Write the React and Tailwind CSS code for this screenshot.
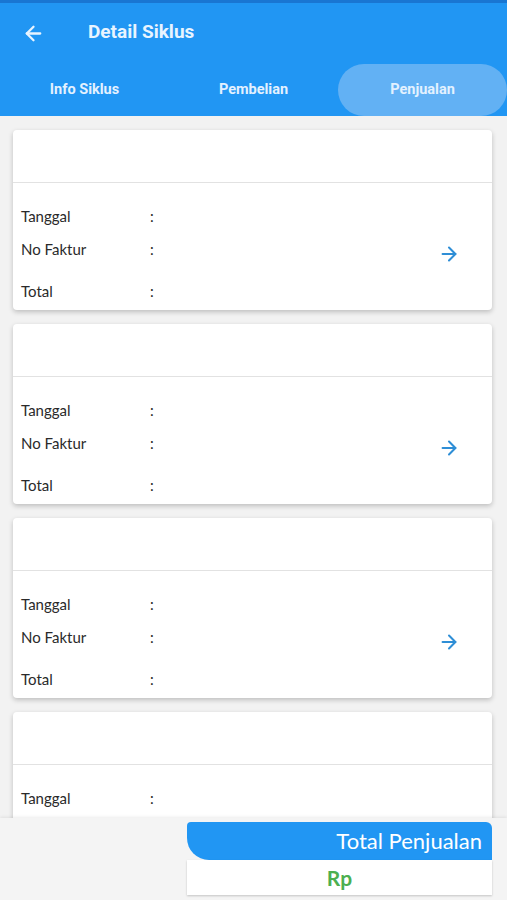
import React from 'react';
import { ArrowLeft, ArrowRight } from 'lucide-react';

const tabs = ['Info Siklus', 'Pembelian', 'Penjualan'];

const Row = ({ label, className = '' }) => (
  <div className={`flex items-center text-[15px] text-[#2a2a2a] ${className}`}>
    <span className="w-[129px]">{label}</span>
    <span>:</span>
  </div>
);

const Card = () => (
  <div className="bg-white rounded-[4px] shadow-[0_2px_5px_rgba(0,0,0,0.22)] shrink-0">
    <div className="h-[53px] border-b border-[#e2e2e2]" />
    <div className="relative h-[127px] px-[8px]">
      <Row label="Tanggal" className="pt-[24px] h-[42px]" />
      <Row label="No Faktur" className="pt-[24px] h-[42px] -mt-[9px]" />
      <Row label="Total" className="pt-[34px] h-[52px] -mt-[10px]" />
      <ArrowRight
        className="absolute right-[32px] top-[60px] w-[22px] h-[22px] text-[#2e8ed6]"
        strokeWidth={2.2}
      />
    </div>
  </div>
);

export default function App() {
  return (
    <div className="h-[900px] w-full flex flex-col overflow-hidden bg-[#f2f2f2] font-['Lato',sans-serif]">
      {/* Header */}
      <div className="bg-[#2196f3] shrink-0">
        <div className="h-[3px] bg-[#1976d2]" />
        <div className="h-[61px] flex items-center px-[22px] font-['Roboto',sans-serif]">
          <ArrowLeft className="w-[23px] h-[23px] text-[#e8f4ff]" strokeWidth={2.4} />
          <span className="ml-[43px] text-[19px] font-bold text-[#e8f4ff] -mt-[2px]">Detail Siklus</span>
        </div>
        <div className="grid grid-cols-3 h-[52px] font-['Roboto',sans-serif]">
          {tabs.map((t, i) => (
            <div
              key={t}
              className={`flex items-center justify-center text-[14.5px] font-bold text-[#e3f1ff] ${
                i === 2 ? 'bg-[#62b1f4] rounded-full' : ''
              }`}
            >
              {t}
            </div>
          ))}
        </div>
      </div>

      {/* List */}
      <div className="flex-1 overflow-hidden pl-[13px] pr-[15px] pt-[14px] flex flex-col gap-[14px]">
        <Card />
        <Card />
        <Card />
        <Card />
      </div>

      {/* Bottom panel */}
      <div className="h-[82px] shrink-0 bg-[#f4f4f4] shadow-[0_-1px_3px_rgba(0,0,0,0.08)] flex justify-end pr-[15px] pt-[4px]">
        <div className="w-[305px] flex flex-col">
          <div className="h-[38px] bg-[#2196f3] rounded-tl-[4px] rounded-tr-[6px] rounded-bl-[22px] flex items-center justify-end pr-[10px]">
            <span className="text-[22px] leading-none text-white">Total Penjualan</span>
          </div>
          <div className="h-[35px] bg-white shadow-[0_1px_2px_rgba(0,0,0,0.2)] flex items-center justify-center">
            <span className="text-[21px] leading-none font-bold text-[#4caf50]">Rp</span>
          </div>
        </div>
      </div>
    </div>
  );
}
